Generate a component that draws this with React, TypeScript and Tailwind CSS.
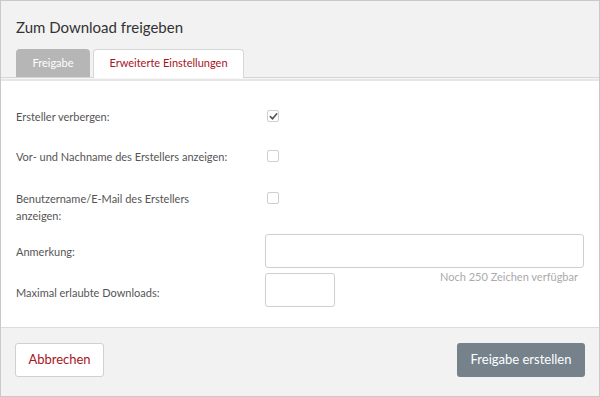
import React from "react";

const Checkbox = ({ checked }: { checked?: boolean }) => (
  <span className="mt-[2px] ml-[2px] flex h-[12px] w-[12px] items-center justify-center rounded-[2px] border border-[#cfcfcf] bg-white">
    {checked && (
      <svg viewBox="0 0 10 10" className="h-[9px] w-[9px]">
        <path d="M1.5 5.2 L4 7.6 L8.6 2" fill="none" stroke="#555" strokeWidth="1.8" strokeLinecap="round" strokeLinejoin="round" />
      </svg>
    )}
  </span>
);

const Label = ({ children }: { children: React.ReactNode }) => (
  <div className="w-[249px] shrink-0 pr-[29px] text-[11px] leading-[17px] text-[#555]">{children}</div>
);

export default function App() {
  return (
    <div className="flex h-[397px] w-[600px] flex-col border border-[#c9c9c9] bg-white font-['Lato',sans-serif]">
      {/* Header with tabs */}
      <div className="border-b border-[#d6d6d6] bg-[#f2f2f2] px-[15px] pt-[16px]">
        <h1 className="text-[15px] leading-[20px] text-[#333]">Zum Download freigeben</h1>
        <div className="mt-[12px] flex gap-[3px]">
          <div className="flex h-[28px] w-[74px] items-center justify-center rounded-t-[4px] bg-[#b6b6b6] text-[11px] text-white">
            Freigabe
          </div>
          <div className="-mb-px flex h-[29px] w-[151px] items-center justify-center rounded-t-[4px] border border-b-0 border-[#d6d6d6] bg-white pb-px text-[11px] text-[#a8141c]">
            Erweiterte Einstellungen
          </div>
        </div>
      </div>
      <div className="h-px bg-[#f6f6f6]" />
      <div className="h-[2px] bg-[#e6e6e6]" />

      {/* Form */}
      <div className="flex-1 px-[15px] pt-[27px]">
        <div className="flex items-start">
          <Label>Ersteller verbergen:</Label>
          <Checkbox checked />
        </div>
        <div className="mt-[23px] flex items-start">
          <Label>Vor- und Nachname des Erstellers anzeigen:</Label>
          <Checkbox />
        </div>
        <div className="mt-[25px] flex items-start">
          <Label>Benutzername/E-Mail des Erstellers anzeigen:</Label>
          <Checkbox />
        </div>
        <div className="mt-[10px] flex items-center">
          <Label>Anmerkung:</Label>
          <input className="h-[34px] w-[320px] rounded-[3px] border border-[#cfcfcf] outline-none" />
        </div>
        <div className="flex items-start">
          <div className="w-[249px] shrink-0 pt-[16px] text-[11px] leading-[17px] text-[#555]">Maximal erlaubte Downloads:</div>
          <div className="pt-[5px]">
            <input className="h-[34px] w-[70px] rounded-[3px] border border-[#cfcfcf] outline-none" />
          </div>
          <span className="ml-auto pr-[6px] pt-[2px] text-[11px] leading-[14px] text-[#aaa]">Noch 250 Zeichen verfügbar</span>
        </div>
      </div>

      {/* Footer */}
      <div className="flex h-[69px] items-start justify-between border-t border-[#dcdcdc] bg-[#f2f2f2] px-[14px] pt-[15px]">
        <button className="h-[34px] w-[89px] rounded-[3px] border border-[#d0d0d0] bg-white text-[13px] text-[#a8141c]">
          Abbrechen
        </button>
        <button className="h-[34px] w-[128px] rounded-[3px] bg-[#76828b] text-[13px] text-white">
          Freigabe erstellen
        </button>
      </div>
    </div>
  );
}
